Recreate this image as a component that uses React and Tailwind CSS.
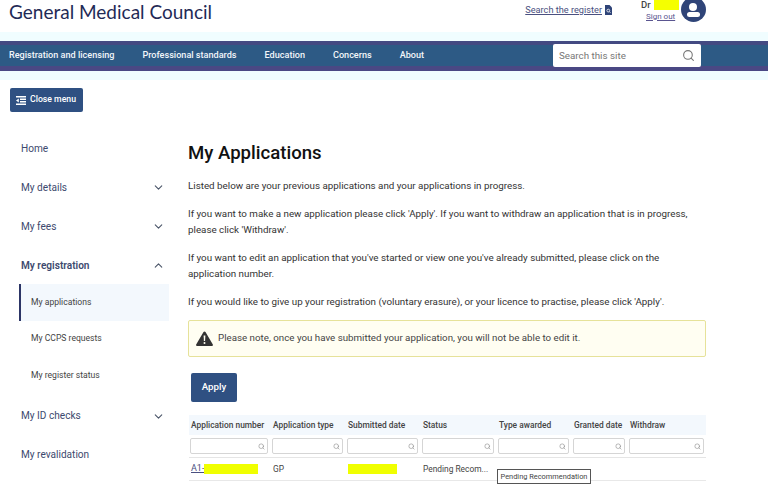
import { ChevronDown, ChevronUp, Search } from "lucide-react";

const NAV = ["Registration and licensing", "Professional standards", "Education", "Concerns", "About"];
const COLS = ["Application number", "Application type", "Submitted date", "Status", "Type awarded", "Granted date", "Withdraw"];
const TABLE_GRID = "grid grid-cols-[82px_75px_75px_76px_75px_56px_79px] items-center";

function SideLink({ label, open, bold, chevron }) {
  return (
    <div className="flex h-[39px] items-center justify-between pl-[21px] pr-[23px]">
      <span className={`text-[10.1px] text-[#3d4a6e] ${bold ? "font-semibold" : ""}`}>{label}</span>
      {chevron && (open ? <ChevronUp size={13} className="text-[#4a5568]" /> : <ChevronDown size={13} className="text-[#4a5568]" />)}
    </div>
  );
}

function SubLink({ label, active }) {
  return (
    <div className={`ml-[19px] flex h-[36.5px] w-[150px] items-center text-[8.6px] text-[#444] ${active ? "border-l-2 border-[#2c3566] bg-[#f3f8fd] pl-[10px]" : "pl-[12px]"}`}>
      {label}
    </div>
  );
}

export default function App() {
  return (
    <div className="relative h-[488px] w-[768px] overflow-hidden bg-white font-['Roboto',sans-serif]">
      {/* top bar */}
      <header className="flex h-[32px] items-start justify-between">
        <div className="ml-[9px] mt-[1px] font-['Lato',sans-serif] text-[19px] leading-[21px] text-[#1f2a56]">General Medical Council</div>
        <div className="flex items-start">
          <a className="mt-[3px] flex items-center gap-[3px] text-[9.2px] text-[#4a5080] underline">
            Search the register
            <svg width="7" height="10" viewBox="0 0 7 10">
              <path d="M0 0h4.5L7 2.5V10H0z" fill="#2f4478" />
              <circle cx="3.3" cy="5.6" r="1.4" fill="none" stroke="#fff" strokeWidth="0.8" />
              <path d="M4.3 6.6l1.2 1.2" stroke="#fff" strokeWidth="0.8" />
            </svg>
          </a>
          <div className="ml-[29px] flex w-[38px] flex-col">
            <div className="flex h-[10px] items-center gap-[3px]">
              <span className="text-[9.5px] font-medium text-[#444]">Dr</span>
              <span className="h-[10px] w-[25px] bg-[#f5ff00]" />
            </div>
            <a className="mt-[1px] pl-[5px] text-[8px] text-[#5a5590] underline">Sign out</a>
          </div>
          <div className="relative ml-[2px] mr-[62px] h-[25px] w-[25px] -translate-y-[3px] overflow-hidden rounded-full bg-[#2f4478]">
            <span className="absolute left-[8px] top-[6px] h-[8px] w-[8px] rounded-full bg-white" />
            <span className="absolute left-[6px] top-[15px] h-[5px] w-[13px] rounded-full bg-white" />
          </div>
        </div>
      </header>

      {/* main nav */}
      <div className="border-y-[9px] border-y-[#f0fdff]">
        <nav className="flex h-[30px] items-center border-t-[4px] border-b-[5px] border-t-[#434a82] border-b-[#4a4884] bg-[#2d5a85] pl-[9px] pr-[67px]">
          <div className="mt-[1px] flex gap-[28px] text-[9.1px] font-medium text-[#f2f6fa]">
            {NAV.map((n) => (
              <span key={n}>{n}</span>
            ))}
          </div>
          <div className="ml-auto flex h-[23px] w-[148px] items-center justify-between rounded-[2px] bg-white px-[6px]">
            <span className="mt-[1px] text-[9.8px] text-[#777]">Search this site</span>
            <Search size={13} className="text-[#777]" />
          </div>
        </nav>
      </div>

      <div className="flex">
        {/* sidebar */}
        <aside className="w-[188px] shrink-0 pt-[8px]">
          <button className="ml-[10px] flex h-[24px] w-[73px] items-center gap-[4px] rounded-[2px] bg-[#2f5082] pl-[6px] text-[8.7px] font-medium text-white">
            <svg width="10" height="9" viewBox="0 0 10 9" fill="#fff">
              <path d="M0 0h10v1.4H0zM4 2.5h6v1.4H4zM4 5h6v1.4H4zM0 7.6h10V9H0zM2.8 2.6v3.8L0 4.5z" />
            </svg>
            Close menu
          </button>
          <div className="mt-[17px]">
            <SideLink label="Home" />
            <SideLink label="My details" chevron />
            <SideLink label="My fees" chevron />
            <SideLink label="My registration" chevron open bold />
            <div className="-mt-[1px] mb-[3px]">
              <SubLink label="My applications" active />
              <SubLink label="My CCPS requests" />
              <SubLink label="My register status" />
            </div>
            <SideLink label="My ID checks" chevron />
            <SideLink label="My revalidation" />
          </div>
        </aside>

        {/* content */}
        <main className="min-w-0 flex-1 pr-[62px]">
          <h1 className="mt-[60px] text-[18.6px] font-medium leading-[26px] text-[#111]">My Applications</h1>
          <div className="mt-[12px] space-y-[12px] text-[9.8px] leading-[16px] text-[#333]">
            <p>Listed below are your previous applications and your applications in progress.</p>
            <p>If you want to make a new application please click 'Apply'. If you want to withdraw an application that is in progress, please click 'Withdraw'.</p>
            <p>If you want to edit an application that you've started or view one you've already submitted, please click on the application number.</p>
            <p>If you would like to give up your registration (voluntary erasure), or your licence to practise, please click 'Apply'.</p>
          </div>
          <div className="mt-[10px] flex h-[37px] items-center gap-[5px] rounded-[2px] border border-[#e6e29a] bg-[#fffef2] pl-[7px] text-[9.75px] text-[#444]">
            <svg width="17" height="15" viewBox="0 0 17 15">
              <path d="M8.5 0.5a1.2 1.2 0 0 1 1 .6l7.2 12.2a1.1 1.1 0 0 1-1 1.7H1.3a1.1 1.1 0 0 1-1-1.7L7.5 1.1a1.2 1.2 0 0 1 1-.6z" fill="#333" />
              <path d="M7.6 4.5h1.8l-.3 5.5H7.9z" fill="#fffef2" />
              <circle cx="8.5" cy="12" r="1" fill="#fffef2" />
            </svg>
            Please note, once you have submitted your application, you will not be able to edit it.
          </div>
          <button className="ml-[3px] mt-[16px] h-[29px] w-[46px] rounded-[2px] bg-[#2f5082] text-[9.7px] font-medium text-white">Apply</button>

          {/* table */}
          <div className="ml-[1px] mt-[13px] text-[8.4px] text-[#444]">
            <div className={`${TABLE_GRID} h-[20px] bg-[#f3f8fd] pl-[2px] font-medium`}>
              {COLS.map((c) => (
                <span key={c} className="whitespace-nowrap">{c}</span>
              ))}
            </div>
            <div className={`${TABLE_GRID} h-[23px] border-b border-[#e5e5e5] pl-[1px]`}>
              {COLS.map((c) => (
                <div key={c} className="mr-[4px] flex h-[16px] items-center justify-end rounded-[2px] border border-[#d5d5d5] pr-[2px]">
                  <Search size={7} className="text-[#888]" />
                </div>
              ))}
            </div>
            <div className={`${TABLE_GRID} h-[23px] border-b border-[#e8e8e8] pl-[2px]`}>
              <span className="flex items-center text-[9px] text-[#4a5080] underline">
                A1-<span className="h-[10px] w-[54px] bg-[#f0ff00]" />
              </span>
              <span>GP</span>
              <span className="h-[10px] w-[49px] bg-[#f0ff00]" />
              <span className="whitespace-nowrap">Pending Recom...</span>
            </div>
          </div>
        </main>
      </div>

      {/* tooltip */}
      <div className="absolute left-[497px] top-[469px] flex h-[15px] w-[94px] items-center justify-center whitespace-nowrap border border-[#555] bg-white text-[7.4px] text-[#444]">
        Pending Recommendation
      </div>
    </div>
  );
}
